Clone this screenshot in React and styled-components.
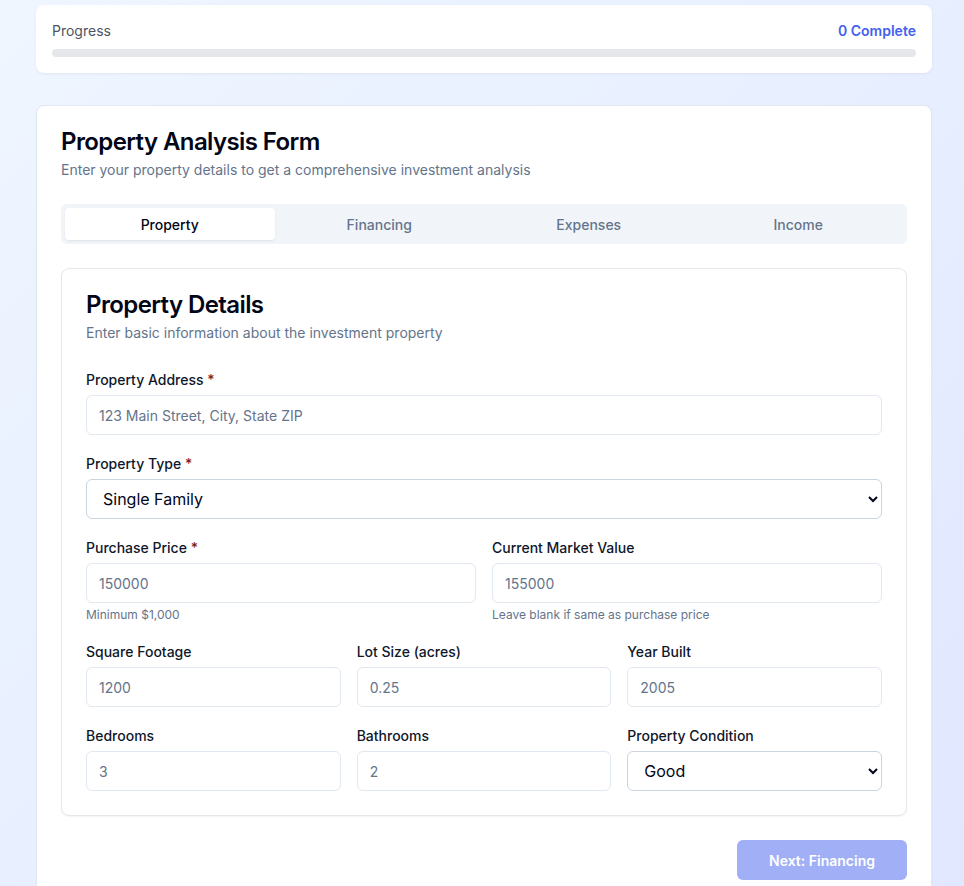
import React, { useState } from "react";
import styled, { createGlobalStyle } from "styled-components";

const GlobalStyle = createGlobalStyle`
  * { box-sizing: border-box; }
  html, body { margin: 0; padding: 0; }
  body {
    font-family: Inter, "Noto Sans", "Liberation Sans", sans-serif;
    color: #0f172a;
    background: linear-gradient(135deg, #eff6ff 0%, #e0e7ff 100%);
    min-height: 100vh;
  }
`;

const Page = styled.div`
  min-height: 100vh;
  padding: 5px 32px 40px 36px;
`;

const Wrap = styled.div`
  width: 896px;
  display: flex;
  flex-direction: column;
  gap: 32px;
`;

const ProgressCard = styled.div`
  background: #fff;
  border-radius: 8px;
  padding: 16px;
  box-shadow: 0 1px 3px rgba(15, 23, 42, 0.06);
`;

const ProgressHead = styled.div`
  display: flex;
  justify-content: space-between;
  font-size: 14px;
  line-height: 20px;
  margin-bottom: 8px;
  color: #4b5563;

  strong {
    color: #4361ee;
    font-weight: 600;
  }
`;

const Bar = styled.div`
  height: 8px;
  border-radius: 999px;
  background: #e5e7eb;
  overflow: hidden;
`;

const Card = styled.div`
  background: #fff;
  border: 1px solid ${(p) => (p.$inner ? "#e5e7eb" : "#e2e8f0")};
  border-radius: 8px;
  box-shadow: 0 1px 2px rgba(15, 23, 42, 0.05);
`;

const Header = styled.div`
  padding: 24px;
  display: flex;
  flex-direction: column;
  gap: 6px;
`;

const Title = styled.h2`
  margin: 0;
  font-size: 24px;
  line-height: 24px;
  font-weight: 600;
  letter-spacing: -0.6px;
  color: #020617;
`;

const Desc = styled.p`
  margin: 0;
  font-size: 14px;
  line-height: 20px;
  color: #64748b;
`;

const Content = styled.div`
  padding: 0 24px 24px;
`;

const TabList = styled.div`
  display: grid;
  grid-template-columns: repeat(4, 1fr);
  padding: 4px;
  height: 40px;
  border-radius: 6px;
  background: #f1f5f9;
  margin-bottom: 24px;
`;

const Tab = styled.button`
  border: none;
  border-radius: 4px;
  font-family: inherit;
  font-size: 14px;
  font-weight: 500;
  cursor: pointer;
  background: ${(p) => (p.$active ? "#fff" : "transparent")};
  color: ${(p) => (p.$active ? "#020617" : "#64748b")};
  box-shadow: ${(p) => (p.$active ? "0 1px 2px rgba(15,23,42,0.08)" : "none")};
`;

const Form = styled.div`
  padding-top: 6px;
  display: flex;
  flex-direction: column;
  gap: 22px;
`;

const Row = styled.div`
  display: grid;
  grid-template-columns: repeat(${(p) => p.$cols || 1}, 1fr);
  gap: 16px;
`;

const Field = styled.div`
  display: flex;
  flex-direction: column;
`;

const Label = styled.label`
  font-size: 14px;
  line-height: 14px;
  font-weight: 500;
  color: #0f172a;
  margin-bottom: 8px;

  span {
    color: #7f1d1d;
  }
`;

const Input = styled.input`
  height: 40px;
  width: 100%;
  border: 1px solid #e2e8f0;
  border-radius: 6px;
  padding: 0 12px;
  font-family: inherit;
  font-size: 14px;
  color: #0f172a;
  background: #fff;
  outline: none;

  &::placeholder {
    color: #64748b;
  }
`;

const Select = styled.select`
  height: 40px;
  width: 100%;
  border: 1px solid #cbd5e1;
  border-radius: 6px;
  padding: 0 12px;
  font-family: inherit;
  font-size: 16px;
  color: #020617;
  background: #fff;
`;

const Hint = styled.div`
  margin-top: 4px;
  font-size: 12px;
  line-height: 16px;
  color: #64748b;
`;

const Footer = styled.div`
  display: flex;
  justify-content: flex-end;
  padding-top: 24px;
`;

const NextButton = styled.button`
  height: 40px;
  padding: 0 32px;
  border: none;
  border-radius: 6px;
  background: #4361ee;
  opacity: 0.5;
  color: #fff;
  font-family: inherit;
  font-size: 14px;
  font-weight: 600;
`;

function TextField({ label, required, placeholder, hint }) {
  return (
    <Field>
      <Label>
        {label} {required && <span>*</span>}
      </Label>
      <Input placeholder={placeholder} />
      {hint && <Hint>{hint}</Hint>}
    </Field>
  );
}

const tabs = ["Property", "Financing", "Expenses", "Income"];

export default function App() {
  const [active, setActive] = useState(0);

  return (
    <>
      <GlobalStyle />
      <Page>
        <Wrap>
          <ProgressCard>
            <ProgressHead>
              <span>Progress</span>
              <strong>0 Complete</strong>
            </ProgressHead>
            <Bar />
          </ProgressCard>

          <Card>
            <Header>
              <Title>Property Analysis Form</Title>
              <Desc>Enter your property details to get a comprehensive investment analysis</Desc>
            </Header>
            <Content>
              <TabList>
                {tabs.map((t, i) => (
                  <Tab key={t} $active={active === i} onClick={() => setActive(i)}>
                    {t}
                  </Tab>
                ))}
              </TabList>

              <Card $inner>
                <Header>
                  <Title>Property Details</Title>
                  <Desc>Enter basic information about the investment property</Desc>
                </Header>
                <Content>
                  <Form>
                    <TextField label="Property Address" required placeholder="123 Main Street, City, State ZIP" />
                    <Field>
                      <Label>
                        Property Type <span>*</span>
                      </Label>
                      <Select defaultValue="single">
                        <option value="single">Single Family</option>
                        <option value="multi">Multi Family</option>
                        <option value="condo">Condo</option>
                        <option value="townhouse">Townhouse</option>
                      </Select>
                    </Field>
                    <Row $cols={2}>
                      <TextField label="Purchase Price" required placeholder="150000" hint="Minimum $1,000" />
                      <TextField label="Current Market Value" placeholder="155000" hint="Leave blank if same as purchase price" />
                    </Row>
                    <Row $cols={3}>
                      <TextField label="Square Footage" placeholder="1200" />
                      <TextField label="Lot Size (acres)" placeholder="0.25" />
                      <TextField label="Year Built" placeholder="2005" />
                    </Row>
                    <Row $cols={3}>
                      <TextField label="Bedrooms" placeholder="3" />
                      <TextField label="Bathrooms" placeholder="2" />
                      <Field>
                        <Label>Property Condition</Label>
                        <Select defaultValue="good">
                          <option value="excellent">Excellent</option>
                          <option value="good">Good</option>
                          <option value="fair">Fair</option>
                          <option value="poor">Poor</option>
                        </Select>
                      </Field>
                    </Row>
                  </Form>
                </Content>
              </Card>

              <Footer>
                <NextButton disabled>Next: Financing</NextButton>
              </Footer>
            </Content>
          </Card>
        </Wrap>
      </Page>
    </>
  );
}
